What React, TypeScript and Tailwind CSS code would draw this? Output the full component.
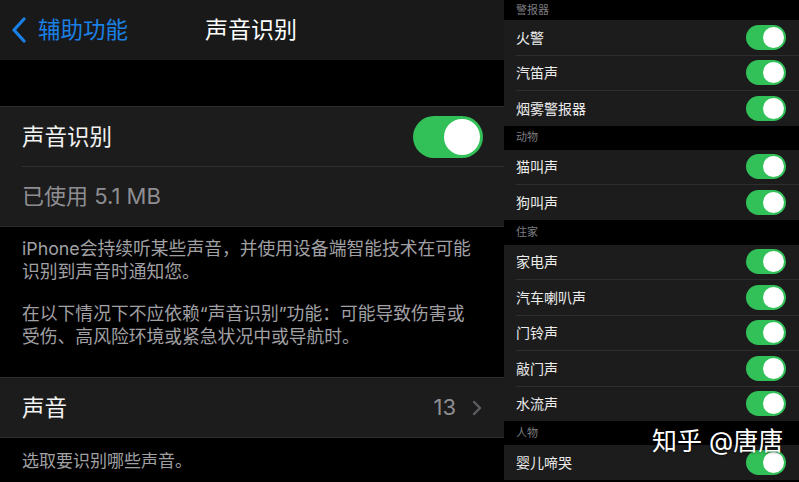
import React from 'react';

const font = "font-['Inter','Noto_Sans_CJK_SC',sans-serif]";

type Group = { title: string; items: string[]; headerH: string };

const GROUPS: Group[] = [
  { title: '警报器', headerH: 'h-[20px]', items: ['火警', '汽笛声', '烟雾警报器'] },
  { title: '动物', headerH: 'h-[24px]', items: ['猫叫声', '狗叫声'] },
  { title: '住家', headerH: 'h-[25px]', items: ['家电声', '汽车喇叭声', '门铃声', '敲门声', '水流声'] },
  { title: '人物', headerH: 'h-[24px]', items: ['婴儿啼哭'] },
];

// iOS style switch, always on here
const Switch: React.FC<{ big?: boolean }> = ({ big }) => (
  <div
    className={
      big
        ? 'w-[70px] h-[42px] rounded-full bg-[#32c158] p-[3px] flex justify-end'
        : 'w-[40px] h-[25px] rounded-full bg-[#32c158] p-[2px] flex justify-end'
    }
  >
    <div className={big ? 'w-[36px] h-[36px] rounded-full bg-white' : 'w-[21px] h-[21px] rounded-full bg-white'} />
  </div>
);

const LeftPane: React.FC = () => (
  <div className="w-[504px] shrink-0 flex flex-col bg-black">
    {/* Nav bar */}
    <div className="h-[60px] bg-[#191919] flex items-center relative">
      <svg width="16" height="26" viewBox="0 0 16 26" className="ml-[11px]">
        <polyline points="13,2 3,13 13,24" fill="none" stroke="#1a80e6" strokeWidth="3.2" strokeLinecap="round" strokeLinejoin="round" />
      </svg>
      <span className="ml-[11px] text-[22.5px] text-[#1a80e6] leading-none">辅助功能</span>
      <span className="ml-[77px] text-[23px] text-white leading-none">声音识别</span>
    </div>

    <div className="h-[46px]" />

    {/* Section: toggle + usage */}
    <div className="bg-[#1c1c1c] border-y border-[#2c2c2c]">
      <div className="h-[59px] flex items-center justify-between pl-[22px] pr-[21px]">
        <span className="text-[22.5px] text-[#f2f2f2]">声音识别</span>
        <Switch big />
      </div>
      <div className="ml-[22px] h-px bg-[#303030]" />
      <div className="h-[59px] flex items-center pl-[22px]">
        <span className="text-[22px] text-[#8e8e92]">已使用 5.1 MB</span>
      </div>
    </div>

    {/* Footer text */}
    <div className="h-[150px] pl-[22px] pt-[11px] text-[17.8px] leading-[22.5px] text-[#a0a0a4] whitespace-nowrap">
      <p>iPhone会持续听某些声音，并使用设备端智能技术在可能<br />识别到声音时通知您。</p>
      <p className="mt-[20px]">在以下情况下不应依赖“声音识别”功能：可能导致伤害或<br />受伤、高风险环境或紧急状况中或导航时。</p>
    </div>

    {/* Sounds row */}
    <div className="h-[61px] bg-[#1c1c1c] border-y border-[#2c2c2c] flex items-center pl-[22px] pr-[22px]">
      <span className="text-[22.5px] text-[#f2f2f2]">声音</span>
      <span className="ml-auto text-[22px] text-[#8e8e92]">13</span>
      <svg width="10" height="16" viewBox="0 0 10 16" className="ml-[16px]">
        <polyline points="2,2 8,8 2,14" fill="none" stroke="#5e5e62" strokeWidth="2.4" strokeLinecap="round" strokeLinejoin="round" />
      </svg>
    </div>

    <div className="pl-[22px] pt-[11px] text-[17px] text-[#a0a0a4]">选取要识别哪些声音。</div>
  </div>
);

const RightPane: React.FC = () => (
  <div className="flex-1 flex flex-col bg-black relative overflow-hidden">
    {GROUPS.map(g => (
      <div key={g.title}>
        <div className={`${g.headerH} flex items-center pl-[12px] text-[11px] text-[#7d7d82]`}>{g.title}</div>
        <div className="bg-[#1c1c1c]">
          {g.items.map((item, i) => (
            <div key={item}>
              {i > 0 && <div className="ml-[12px] h-px bg-[#2e2e2e]" />}
              <div className="h-[34.5px] flex items-center justify-between pl-[12px] pr-[13px]">
                <span className="text-[14px] text-[#ececec]">{item}</span>
                <Switch />
              </div>
            </div>
          ))}
        </div>
      </div>
    ))}

    {/* Zhihu watermark */}
    <div className="absolute left-[148px] top-[429px] text-[25px] text-white leading-none [text-shadow:0_0_3px_rgba(0,0,0,0.9)]">
      知乎 @唐唐
    </div>
  </div>
);

export default function App() {
  return (
    <div className={`w-[799px] h-[482px] flex overflow-hidden bg-black ${font}`}>
      <LeftPane />
      <RightPane />
    </div>
  );
}
